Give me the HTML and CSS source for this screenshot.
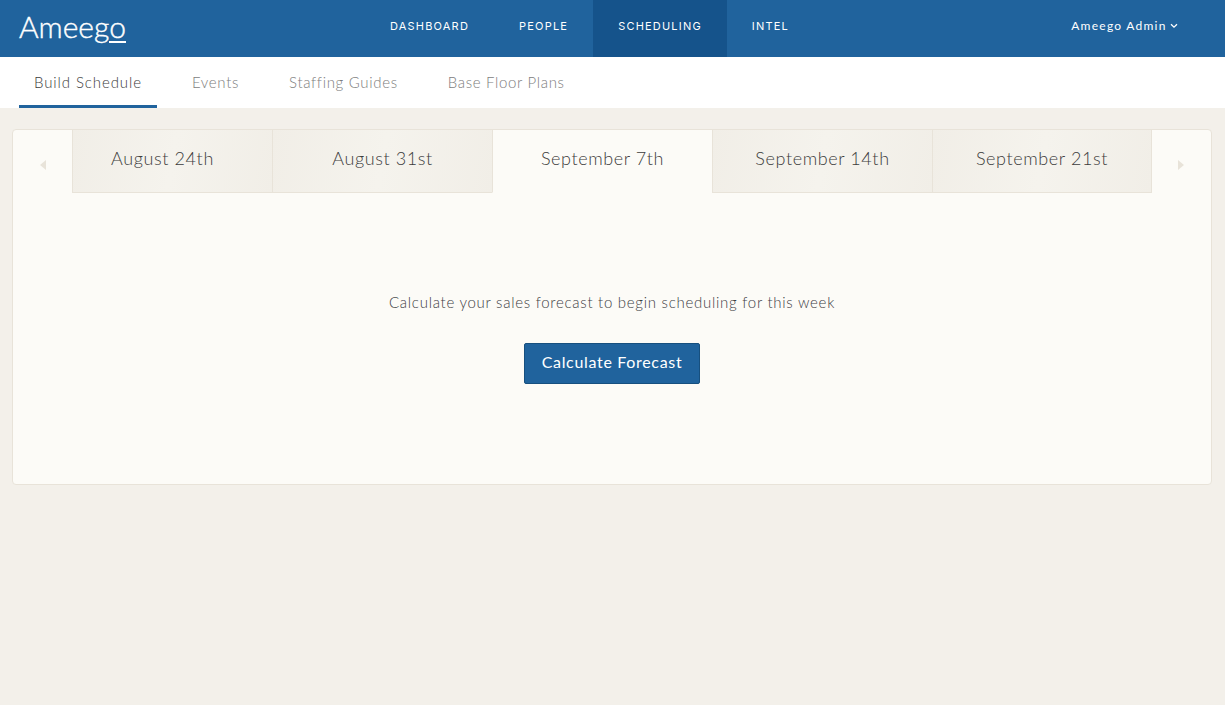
FILE: index.html
```html
<!DOCTYPE html>
<html lang="en">
<head>
  <meta charset="UTF-8">
  <meta name="viewport" content="width=device-width, initial-scale=1.0">
  <title>Ameego - Build Schedule</title>
  <link rel="stylesheet" href="styles.css">
</head>
<body>
  <header class="topbar">
    <a class="logo" href="#">Ameeg<span class="logo-o">o</span></a>
    <nav class="main-nav">
      <a href="#">DASHBOARD</a>
      <a href="#">PEOPLE</a>
      <a class="active" href="#">SCHEDULING</a>
      <a href="#">INTEL</a>
    </nav>
    <a class="user-menu" href="#">
      Ameego Admin
      <svg class="chevron" width="8" height="6" viewBox="0 0 8 6"><path d="M1 1.2 L4 4.2 L7 1.2" fill="none" stroke="#fff" stroke-width="1.3"/></svg>
    </a>
  </header>

  <nav class="sub-nav">
    <a class="active" href="#">Build Schedule</a>
    <a href="#">Events</a>
    <a href="#">Staffing Guides</a>
    <a href="#">Base Floor Plans</a>
  </nav>

  <main class="content">
    <section class="card">
      <div class="weeks">
        <div class="week-arrow"><span class="arrow-left"></span></div>
        <a class="week week-first" href="#">August 24th</a>
        <a class="week" href="#">August 31st</a>
        <a class="week active" href="#">September 7th</a>
        <a class="week" href="#">September 14th</a>
        <a class="week" href="#">September 21st</a>
        <div class="week-arrow"><span class="arrow-right"></span></div>
      </div>
      <div class="empty-state">
        <p>Calculate your sales forecast to begin scheduling for this week</p>
        <button class="btn-primary">Calculate Forecast</button>
      </div>
    </section>
  </main>
</body>
</html>
```

FILE: styles.css
```css
body {
  margin: 0;
  height: 705px;
  overflow: hidden;
  background-color: #f3f0ea;
  font-family: Lato, "Open Sans", sans-serif;
  color: #5b5b5b;
}
a {
  text-decoration: none;
}

/* top bar */
.topbar {
  display: flex;
  align-items: center;
  height: 57px;
  background-color: #20639d;
  color: #fff;
}
.logo {
  flex: none;
  width: 365px;
  height: 57px;
  padding-left: 19px;
  box-sizing: border-box;
  color: #fff;
  font-family: Lato, sans-serif;
  font-size: 30px;
  font-weight: 300;
  -webkit-text-stroke: 0.4px #fff;
  line-height: 52px;
}
.logo-o {
  display: inline-block;
  line-height: 30px;
  border-bottom: 2px solid #fff;
}
.main-nav {
  display: flex;
  height: 100%;
}
.main-nav a {
  display: flex;
  align-items: center;
  padding: 0 25px 6px;
  color: #fff;
  font-family: Inter, sans-serif;
  font-size: 11px;
  letter-spacing: 1.2px;
  box-sizing: border-box;
}
.main-nav a.active {
  background-color: #15538b;
}
.user-menu {
  margin-left: auto;
  margin-right: 47px;
  padding-bottom: 6px;
  color: #fff;
  font-size: 12px;
  letter-spacing: 1.25px;
}
.chevron {
  margin-left: -1px;
  vertical-align: 1px;
}

/* second row */
.sub-nav {
  display: flex;
  gap: 20px;
  height: 51px;
  padding-left: 19px;
  background-color: #fff;
}
.sub-nav a {
  padding: 16px 15px 0;
  color: #7d7d7d;
  font-size: 15px;
  font-weight: 300;
  letter-spacing: 0.68px;
  box-sizing: border-box;
}
.sub-nav a.active {
  color: #3c3c3c;
  letter-spacing: 0.9px;
  border-bottom: 3px solid #20639d;
}

/* card with weeks */
.content {
  padding: 21px 13px 0 12px;
}
.card {
  height: 354px;
  background-color: #fcfbf7;
  border: 1px solid #e8e3d9;
  border-radius: 4px;
}
.weeks {
  display: flex;
  height: 63px;
}
.week-arrow {
  flex: none;
  display: flex;
  align-items: center;
  justify-content: center;
  width: 59px;
  padding-top: 7px;
  box-sizing: border-box;
}
.week-arrow:last-child {
  width: 58px;
}
.arrow-left,
.arrow-right {
  width: 0;
  height: 0;
  border-top: 5px solid transparent;
  border-bottom: 5px solid transparent;
}
.arrow-left {
  border-right: 6px solid #e8e3d9;
}
.arrow-right {
  border-left: 6px solid #e8e3d9;
}
.week {
  flex: none;
  display: flex;
  align-items: center;
  justify-content: center;
  width: 220px;
  padding-bottom: 7px;
  box-sizing: border-box;
  background: linear-gradient(100deg, #f1eee7, #f5f3ed 50%, #f1eee7);
  border-bottom: 1px solid #e8e3d9;
  border-left: 1px solid #e8e3d9;
  color: #3c3c3c;
  font-size: 18px;
  font-weight: 300;
  letter-spacing: 0.6px;
}
.week-first {
  width: 200px;
  padding-right: 20px;
}
.week:nth-last-child(2) {
  border-right: 1px solid #e8e3d9;
}
.week.active {
  background: #fcfbf7;
  border-bottom-color: transparent;
  border-right: 1px solid #e8e3d9;
  width: 221px;
  margin-right: -1px;
}

.empty-state {
  display: flex;
  flex-direction: column;
  align-items: center;
  padding-top: 99px;
}
.empty-state p {
  margin: 0 0 31px;
  color: #3c4044;
  font-size: 15px;
  font-weight: 300;
  line-height: 20px;
  letter-spacing: 0.73px;
}
.btn-primary {
  width: 176px;
  height: 41px;
  padding-bottom: 5px;
  background-color: #20639d;
  border: 1px solid #17507f;
  border-radius: 2px;
  color: #fff;
  font-family: Lato, sans-serif;
  font-size: 16px;
  letter-spacing: 0.68px;
}
```
